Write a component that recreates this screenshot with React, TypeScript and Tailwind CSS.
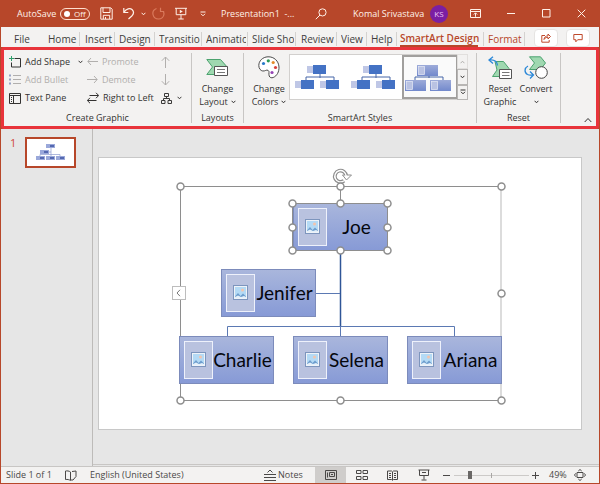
import type { ReactNode } from "react";

type SvgProps = { w: number; h: number; className?: string; children: ReactNode };

function Svg({ w, h, className = "", children }: SvgProps) {
  return (
    <svg
      width={w}
      height={h}
      viewBox={`0 0 ${w} ${h}`}
      fill="none"
      stroke="currentColor"
      strokeWidth={1}
      aria-hidden="true"
      className={`block shrink-0 ${className}`}
    >
      {children}
    </svg>
  );
}

function Caret({ className = "" }: { className?: string }) {
  return (
    <Svg w={5} h={4} className={className}>
      <path d="M.6.8 2.5 2.8 4.4.8" />
    </Svg>
  );
}

/* ---------- Title bar ---------- */

function TitleBar() {
  return (
    <header className="flex h-[27px] shrink-0 items-center bg-[#b7472a] text-[10px] leading-4 text-[#fff1e8]">
      <label className="flex w-[100px] items-center gap-[5px] pl-[17px]">
        <span className="w-[38px] whitespace-nowrap text-[9px]">AutoSave</span>
        <input type="checkbox" className="peer sr-only" />
        <span className="flex h-3 w-[30px] items-center gap-1 rounded-full border border-[#ffe0d0] pl-[3px] text-[8px] leading-[10px]">
          <span className="size-[6px] rounded-full bg-white" />
          Off
        </span>
      </label>
      <div className="flex flex-1 items-center">
        <button aria-label="Save" className="w-[23px]">
          <Svg w={13} h={13}>
            <path d="M.8.8h9.9l1.5 1.5v9.9H.8zM3 .8v4.7h7V.8M3.3 12V8.300h6.400V12M5.500 12v-2" />
          </Svg>
        </button>
        <button aria-label="Undo" className="w-[18px]">
          <Svg w={12} h={13}>
            <path strokeWidth="1.200" d="M.8 1v4.500h4.500M1 5.200C3.500 1.500 7 .8 9 2.500c2 2 1.800 4.500-.2 6.500L5.500 12" />
          </Svg>
        </button>
        <button aria-label="Undo history" className="w-[11px]">
          <Caret />
        </button>
        <button aria-label="Redo" className="w-[23px] text-[#da7a5d]">
          <Svg w={13} h={13}>
            <path strokeWidth="1.200" d="M8.500.8v3.700h3.700M4.500 1.500C1.800 2.500.5 5 1 7.500c.6 2.800 3 4.500 5.500 4.500 3 0 5.300-2.300 5.500-5 0-1-.3-2-.8-2.800" />
          </Svg>
        </button>
        <button aria-label="Start slide show" className="w-[25px]">
          <Svg w={12} h={13}>
            <path d="M0 1.300h12M1.200 1.300v6.400h9.600V1.300M6 7.700V12M3.300 12h5.400" />
            <path d="M4.800 2.800v3.400L7.800 4.500z" fill="currentColor" stroke="none" />
          </Svg>
        </button>
        <button aria-label="Customize toolbar" className="w-[21px]">
          <Svg w={6} h={6}>
            <path d="M.5 1h5M1 2.800 3 4.800 5 2.800" />
          </Svg>
        </button>
        <span className="min-w-[94px] flex-1 whitespace-pre text-[9px]">Presentation1  -...</span>
        <button aria-label="Search" className="w-[38px]">
          <Svg w={12} h={12}>
            <circle cx="7.500" cy="4.400" r="3.600" />
            <path d="M5 7 .8 11.200" />
          </Svg>
        </button>
        <span className="w-[77px] whitespace-nowrap text-[9px]">Komal Srivastava</span>
        <button className="size-[18px] rounded-full bg-[#7b1fa2] text-center text-[8px] leading-[18px] text-[#eac5f5]">
          KS
        </button>
        <button aria-label="Ribbon display options" className="ml-[22px] w-[37px]">
          <Svg w={11} h={9}>
            <path d="M.5.5h10v8H.5zM.5 2.500h10M5.500 7.800V4M3.800 5.500 5.500 3.800l1.700 1.700" />
          </Svg>
        </button>
        <button aria-label="Minimize" className="w-[35px]">
          <Svg w={8} h={9}>
            <path d="M0 4.500h8" />
          </Svg>
        </button>
        <button aria-label="Maximize" className="w-[35px]">
          <Svg w={9} h={9}>
            <path d="M.5.5h7.500v7.500H.5z" />
          </Svg>
        </button>
        <button aria-label="Close" className="w-[23px]">
          <Svg w={9} h={9}>
            <path d="m.7.7 7.600 7.600M8.300.7.7 8.300" />
          </Svg>
        </button>
      </div>
    </header>
  );
}

/* ---------- Tabs ---------- */

const tabs: { name: string; width: string }[] = [
  { name: "File", width: "w-[33px]" },
  { name: "Home", width: "w-[33px] border-r pl-px" },
  { name: "Insert", width: "w-[35px] border-r pl-[5px]" },
  { name: "Design", width: "w-[40px] border-r pl-1" },
  { name: "Transitions", width: "w-[47px] border-r pl-1" },
  { name: "Animations", width: "w-[46px] border-r pl-1" },
  { name: "Slide Show", width: "w-[48px] border-r pl-1" },
  { name: "Review", width: "w-[41px] border-r pl-[5px]" },
  { name: "View", width: "w-[30px] border-r pl-1" },
  { name: "Help", width: "w-[30px] border-r pl-1" },
];

function TabBar() {
  return (
    <nav className="flex h-5 shrink-0 items-center bg-[#f3f2f1] pl-[13px] pt-[3px] text-[10px] leading-[14px] text-[#3f3e3d]">
      {tabs.map((tab) => (
        <button key={tab.name} className={`${tab.width} shrink-0 border-[#d4d2d0] pr-px text-left`}>
          <span className="block overflow-hidden whitespace-nowrap">{tab.name}</span>
        </button>
      ))}
      <button className="w-[86px] shrink-0 self-stretch whitespace-nowrap border-[#d4d2d0] pl-[3px] text-left font-semibold text-[#b7472a]">
        <span className="block h-[17px] w-[78px] border-b-2 border-[#b7472a] pt-px">SmartArt Design</span>
      </button>
      <button className="w-[42px] shrink-0 border-x border-[#d4d2d0] pl-1 text-left text-[#b7472a]">Format</button>
      <div className="ml-auto flex gap-2 self-end pr-[9px] text-[#c0492b]">
        <button aria-label="Share" className="flex h-[18px] w-6 items-center justify-center rounded-sm border border-[#e6e4e2] bg-white">
          <Svg w={10} h={10}>
            <path d="M4 2.500H.8v6.700h7.400V7M3 6.500c.2-2.400 1.800-3.600 4-3.600V1l2.500 2.500L7 6V4.300c-1.800 0-3 .6-4 2.200z" />
          </Svg>
        </button>
        <button aria-label="Comments" className="flex h-[18px] w-6 items-center justify-center rounded-sm border border-[#e6e4e2] bg-white">
          <Svg w={10} h={10}>
            <path d="M.8 1.500h8.400v5.200H4.700L2.800 8.800V6.700h-2z" />
          </Svg>
        </button>
      </div>
    </nav>
  );
}

/* ---------- Ribbon ---------- */

function Group({ label, className, children }: { label: string; className: string; children: ReactNode }) {
  return (
    <section aria-label={label} className={`flex shrink-0 flex-col border-r border-[#c8c6c4] ${className}`}>
      <div className="flex h-[60px] shrink-0">{children}</div>
      <div className="text-center leading-[10px]">{label}</div>
    </section>
  );
}

function Command({ icon, label, disabled, caret }: { icon: ReactNode; label: string; disabled?: boolean; caret?: boolean }) {
  return (
    <button disabled={disabled} className="flex h-[18px] items-center gap-1 whitespace-nowrap disabled:text-[#b1afad]">
      {icon}
      <span>{label}</span>
      {caret && <Caret className="ml-1" />}
    </button>
  );
}

function BigCommand({ icon, first, second, caret, className }: { icon: ReactNode; first: string; second?: string; caret?: boolean; className: string }) {
  return (
    <button className={`flex flex-col items-center leading-[13px] ${className}`}>
      <span className="flex h-[29px] items-start pt-[3px]">{icon}</span>
      <span className="whitespace-nowrap">{first}</span>
      <span className="flex h-[13px] items-center gap-[3px]">
        {second}
        {caret && <Caret />}
      </span>
    </button>
  );
}

const AddShapeIcon = (
  <Svg w={12} h={12}>
    <path d="M5.500 2.500h6v8.500h-9V6.500" />
    <path stroke="#2e9e6b" d="M2.500 0v5M0 2.500h5" />
  </Svg>
);
const BulletIcon = (
  <Svg w={12} h={12}>
    <path d="M4 1.500h8M4 5.500h8M4 9.500h8" />
    <path stroke="#98a3c4" strokeWidth="2" d="M0 1.500h2M0 5.500h2M0 9.500h2" />
  </Svg>
);
const TextPaneIcon = (
  <Svg w={12} h={11}>
    <path d="M.5.5h11v10H.5zM.5 2.500h11M4.500 2.500v8M2 4.500h1M2 6.500h1M2 8.500h1" />
  </Svg>
);
const LeftIcon = (
  <Svg w={11} h={10}>
    <path d="M11 4.500H1M4 1 .8 4.500 4 8" />
  </Svg>
);
const RightIcon = (
  <Svg w={11} h={10}>
    <path d="M0 4.500h10M7 1l3.200 3.500L7 8" />
  </Svg>
);
const SwapIcon = (
  <Svg w={12} h={12}>
    <path d="M2.500 3.500h9M9 .8l2.700 2.700L9 6.200M9.500 8.500h-9M3 5.800.3 8.500 3 11.200" />
  </Svg>
);

function LayoutIcon() {
  return (
    <Svg w={23} h={19}>
      <path d="M.8 1.500h13.700l6.700 7.500-6.700 7.500H.8L6.500 9z" fill="#9fd8b0" stroke="#4ca36f" />
      <path d="M8.500 8.500h13v9h-13z" fill="#fff" stroke="#555" />
      <path d="M11 11.500h8M11 14.500h8" stroke="#777" />
    </Svg>
  );
}

function PaletteIcon() {
  return (
    <Svg w={22} h={23}>
      <path
        d="M10 .8C4.500 1 .8 5 .8 9.500c0 3 1.800 5.300 4 5.500 2.500.2 3.500-1.500 5.200-.7 2 .9.300 3.300 1.200 5.700.6 1.600 2.300 2.200 4 1.500 3.800-1.600 6-5.800 5.800-10.500C20.700 5 16 .6 10 .8z"
        fill="#fff"
        stroke="#4b4b4b"
      />
      <g stroke="none">
        <circle cx="5.500" cy="7.500" r="1.600" fill="#2878c8" />
        <circle cx="10.300" cy="4.800" r="1.600" fill="#2c9a57" />
        <circle cx="15.200" cy="6.500" r="1.600" fill="#e48a2a" />
        <circle cx="17.500" cy="11.500" r="1.600" fill="#d8413c" />
        <circle cx="14" cy="16.500" r="1.600" fill="#9545b4" />
      </g>
    </Svg>
  );
}

function ResetIcon() {
  return (
    <Svg w={25} h={24}>
      <path d="M7 5.500h8.500l5.500 7-5 8H4.500L9 14z" fill="#9fd8b0" stroke="#4ca36f" />
      <path d="M11.500 13.500h12v9h-12z" fill="#fff" stroke="#555" />
      <path d="M14 16.500h7.500M14 19.500h7.500" stroke="#777" />
      <path d="M5 .8 1 4l4 3.500M1.500 4C6 3.500 9 5.500 9.500 9.500" stroke="#2b88d8" strokeWidth="1.300" />
    </Svg>
  );
}

function ConvertIcon() {
  return (
    <Svg w={24} h={24}>
      <path d="M5.500.8h11L21.500 7l-5 6.500h-11L10.500 7z" fill="#9fd8b0" stroke="#4ca36f" />
      <circle cx="17.500" cy="16.500" r="5.800" fill="#fff" stroke="#444" />
      <path d="M4 10C.3 12 0 16.500 3.500 18.500c1.500.8 3.500.8 5 .5M6 15.500 9.500 19 6 22.500" stroke="#2b88d8" strokeWidth="1.300" />
    </Svg>
  );
}

function StylePreview({ selected }: { selected?: boolean }) {
  const boxes = [
    [18, 7],
    [6, 22],
    [31, 22],
  ];
  return (
    <Svg w={52} h={38}>
      <path d="M25 16v4M11 22v-3h28v3" stroke="#4667a8" />
      {boxes.map(([x, y]) =>
        selected ? (
          <g key={x} stroke="none">
            <rect x={x - 5} y={y} width="21" height="11" fill="url(#previewFill)" />
            <rect x={x - 3.500} y={y + 1.500} width="6" height="8" fill="#b9c2e2" stroke="#e7eaf6" strokeWidth=".7" />
          </g>
        ) : (
          <g key={x} stroke="none">
            <rect x={x - 6} y={y + 1} width="7" height="7" fill="#bfc7e6" />
            <rect x={x} y={y} width="13" height="9" fill="#4472c4" />
          </g>
        ),
      )}
      <defs>
        <linearGradient id="previewFill" x1="0" y1="0" x2="0" y2="1">
          <stop offset="0" stopColor="#9dabd9" />
          <stop offset="1" stopColor="#7289cc" />
        </linearGradient>
      </defs>
    </Svg>
  );
}

function Ribbon() {
  return (
    <div className="flex h-[82px] shrink-0 rounded-[3px] border-[3px] border-[#e8343b] bg-[#f3f2f1] pb-[3px] pt-[3px] text-[9px] leading-[14px] text-[#333231]">
      <Group label="Create Graphic" className="w-[188px]">
        <div className="w-[79px] pl-[5px]">
          <Command icon={AddShapeIcon} label="Add Shape" caret />
          <Command icon={BulletIcon} label="Add Bullet" disabled />
          <Command icon={TextPaneIcon} label="Text Pane" />
        </div>
        <div className="w-[78px] pl-1">
          <Command icon={LeftIcon} label="Promote" disabled />
          <Command icon={RightIcon} label="Demote" disabled />
          <Command icon={SwapIcon} label="Right to Left" />
        </div>
        <div className="text-[#b1afad]">
          <button disabled aria-label="Move up" className="flex h-[18px] items-center">
            <Svg w={10} h={12}>
              <path d="M4.500 12V1M.8 4.800 4.500 1l3.700 3.800" />
            </Svg>
          </button>
          <button disabled aria-label="Move down" className="flex h-[18px] items-center">
            <Svg w={10} h={12}>
              <path d="M4.500 0v11M.8 7.200 4.500 11l3.700-3.800" />
            </Svg>
          </button>
          <button aria-label="Organization chart layout" className="flex h-[18px] items-center gap-[5px] text-[#3b3a39]">
            <Svg w={11} h={11}>
              <path d="M3.500.5h4v3h-4zM.5 7.500h3.500v3H.5zM7 7.500h3.500v3H7zM5.500 3.500v2M2.500 7.500v-2h6v2" />
            </Svg>
            <Caret />
          </button>
        </div>
      </Group>

      <Group label="Layouts" className="w-[52px]">
        <BigCommand icon={<span className="pt-[2px]"><LayoutIcon /></span>} first="Change" second="Layout" caret className="w-full" />
      </Group>

      <Group label="SmartArt Styles" className="w-[233px]">
        <BigCommand icon={<PaletteIcon />} first="Change" second="Colors" caret className="w-[45px] pl-[5px]" />
        <div className="mt-px flex h-[46px]">
          <div className="flex w-[168px] border border-[#d2d0ce] bg-white">
            <button aria-label="Simple fill style" className="w-14 pl-[5px]">
              <StylePreview />
            </button>
            <button aria-label="White outline style" className="w-14 pl-[5px]">
              <StylePreview />
            </button>
            <button aria-label="Subtle effect style" className="flex-1 border-2 border-[#a19f9d] bg-[#fafafa]">
              <StylePreview selected />
            </button>
          </div>
          <div className="flex w-[11px] flex-col">
            <button disabled aria-label="Previous styles" className="flex flex-1 items-center justify-center border border-[#e1dfdd] text-[#b1afad]">
              <Caret className="rotate-180" />
            </button>
            <button aria-label="Next styles" className="flex flex-1 items-center justify-center border border-[#b8b6b4]">
              <Caret />
            </button>
            <button aria-label="All styles" className="flex flex-1 items-center justify-center border border-[#b8b6b4]">
              <Svg w={6} h={6}>
                <path d="M.5 1h5M1 2.800 3 4.800 5 2.800" />
              </Svg>
            </button>
          </div>
        </div>
      </Group>

      <Group label="Reset" className="w-[84px]">
        <BigCommand icon={<ResetIcon />} first="Reset" second="Graphic" className="ml-1 w-[38px]" />
        <BigCommand icon={<ConvertIcon />} first="Convert" caret className="w-[34px]" />
      </Group>

      <button aria-label="Collapse the ribbon" className="ml-auto mr-1 self-end">
        <Svg w={8} h={6}>
          <path d="m.7 5 3.300-3.500L7.300 5" />
        </Svg>
      </button>
    </div>
  );
}

/* ---------- Slide ---------- */

function PictureIcon() {
  return (
    <svg viewBox="0 0 15 15" className="block size-[15px]" aria-hidden="true">
      <rect x=".5" y=".5" width="14" height="14" fill="#eef3f9" stroke="#7d95bd" />
      <rect x="2" y="2" width="11" height="11" fill="#b4daf5" />
      <circle cx="9.500" cy="5" r="1.500" fill="#f3c4ad" />
      <path d="M2 11.500 5 8l2.500 3L10 8.500l3 3V13H2z" fill="#6d9dcd" />
      <path d="M2 13v-1l3-1.500 3 1.500 3-1 2 1v1z" fill="#e4f0fa" />
    </svg>
  );
}

const people = [
  { name: "Joe", place: "left-[113px] top-[17px]" },
  { name: "Jenifer", place: "left-[41px] top-[83px]" },
  { name: "Charlie", place: "left-[-1px] top-[150px]" },
  { name: "Selena", place: "left-[113px] top-[150px]" },
  { name: "Ariana", place: "left-[227px] top-[150px]" },
];

const handles = [
  [0, 0], [160, 0], [321, 0], [321, 107], [0, 214], [160, 214], [321, 214],
  [112, 17], [160, 17], [207, 17], [112, 41], [207, 41], [112, 64], [160, 64], [207, 64],
];

function SmartArt() {
  return (
    <div className="relative h-[214px] w-[321px] shrink-0">
      <svg width="321" height="214" className="absolute overflow-visible" fill="none" aria-hidden="true">
        <path d="M.5 0v214M0 .5h321M0 214.500h321" stroke="#8e8e8e" />
        <path d="M321 0v214" stroke="#dcdcdc" strokeWidth="2" />
        <path d="M160.500 0v17" stroke="#8e8e8e" />
        <path d="M160.500 65v75" stroke="#2f5597" strokeWidth="1.500" />
        <path d="M160.500 140v10M135 107.500h25M47.500 150v-9.500h227v9.500" stroke="#5b79b3" />
      </svg>
      {people.map((p) => (
        <div
          key={p.name}
          className={`absolute flex h-12 w-[95px] items-center border border-[#7c8bbb] bg-linear-to-b from-[#a9b6dc] to-[#879ad6] pl-1 ${p.place}`}
        >
          <span className="flex h-[38px] w-[29px] shrink-0 items-center justify-center border border-[#eef1fb] bg-[#b9c2df]">
            <PictureIcon />
          </span>
          <span className="flex-1 text-center font-['Lato','Liberation_Sans',sans-serif] text-[19px] leading-6 text-[#05070d]">{p.name}</span>
        </div>
      ))}
      <svg width="321" height="214" className="absolute overflow-visible" fill="none" aria-hidden="true">
        <path d="M112.500 17.500h95v47h-95z" stroke="#8e8e8e" />
        <path d="M164-5.200A5.700 5.700 0 1 1 166.200-10" stroke="#8e8e8e" strokeWidth="3.800" />
        <path d="M162.500-11h9l-5 5z" fill="#fff" stroke="#8e8e8e" />
        <path d="M164-5.200A5.700 5.700 0 1 1 166.200-10" stroke="#fff" strokeWidth="1.400" />
        <g fill="#fff" stroke="#8e8e8e" strokeWidth="1.500">
          {handles.map(([x, y]) => (
            <circle key={`${x}-${y}`} cx={x + 0.5} cy={y + 0.5} r="3.500" />
          ))}
        </g>
      </svg>
      <button aria-label="Open text pane" className="absolute left-[-8px] top-[100px] flex h-[14px] w-[14px] items-center justify-center border border-[#bdbdbd] bg-white text-[#777]">
        <Svg w={5} h={8}>
          <path d="M4 .8 1 4l3 3.200" />
        </Svg>
      </button>
    </div>
  );
}

function Thumbnail() {
  const boxes = [[19, 5], [13, 11], [9, 17], [19, 17], [29, 17]];
  return (
    <svg viewBox="0 0 47 27" className="block h-[27px] w-[47px]" aria-hidden="true">
      <path d="M24 9v8M20 13h4M13 17v-1.500h20V17" stroke="#8c9bd0" strokeWidth=".7" fill="none" />
      {boxes.map(([x, y]) => (
        <g key={`${x}-${y}`}>
          <rect x={x} y={y} width="9" height="4" fill="#9aa8da" />
          <rect x={x + 4} y={y + 1} width="4" height="2" fill="#5468b0" />
        </g>
      ))}
    </svg>
  );
}

function Workspace() {
  return (
    <main className="flex min-h-[337px] flex-1 bg-[#e6e6e6]">
      <aside className="flex w-[92px] shrink-0 items-start border-r border-[#bdbbb9] pl-[9px] pt-2">
        <span className="w-[15px] text-[11px] leading-3 text-[#d0463c]">1</span>
        <button aria-label="Slide 1" className="border-2 border-[#b7472a] bg-white">
          <Thumbnail />
        </button>
      </aside>
      <div className="mb-px flex flex-1 border-b border-[#c8c6c4] pb-[34px] pl-[5px] pr-[17px] pt-7">
        <div className="flex flex-1 items-center justify-center border border-[#c8c8c8] bg-white pb-[2px]">
          <SmartArt />
        </div>
      </div>
    </main>
  );
}

/* ---------- Status bar ---------- */

function StatusBar() {
  return (
    <footer className="flex h-[17px] shrink-0 items-center border-t border-[#c8c6c4] bg-[#f3f2f1] pl-[5px] text-[9px] leading-[14px] text-[#4a4847]">
      <span className="w-[59px]">Slide 1 of 1</span>
      <button aria-label="Spelling check" className="w-[25px]">
        <Svg w={12} h={11}>
          <path d="M5.500 2v8.500M5.500 2C4 .8 2 .8.500 1v8.500c2-.2 3.500 0 5 1M7 1.500 11 1v5.500L8 10H6" />
        </Svg>
      </button>
      <span className="flex-1 whitespace-nowrap">English (United States)</span>
      <button className="flex w-[51px] items-center gap-[2px]">
        <Svg w={12} h={12}>
          <path d="M0 5.500h12M0 8.500h12M0 11.500h12M3.500 3.500 6 1l2.500 2.500" />
        </Svg>
        Notes
      </button>
      <button aria-label="Normal view" className="flex h-4 w-[31px] items-center justify-center bg-[#cfcdcb]">
        <Svg w={12} h={10}>
          <path d="M.5.5h11v9H.5zM2.500 2.500v5M4.500 2.500h5v4h-5zM6 4.500h2" />
        </Svg>
      </button>
      <button aria-label="Slide sorter" className="flex h-4 w-[31px] items-center justify-center">
        <Svg w={12} h={10}>
          <path d="M.5.5H5v3H.5zM7 .5h4.500v3H7zM.5 6.500H5v3H.5zM7 6.500h4.500v3H7z" />
        </Svg>
      </button>
      <button aria-label="Reading view" className="flex h-4 w-[31px] items-center justify-center">
        <Svg w={11} h={11}>
          <path d="M.5 1h4l1 .8 1-.8h4v8.500h-4l-1 .8-1-.8h-4zM5.500 2v8M2 3.500h2M2 5.500h2M2 7.500h2M7 3.500h2M7 5.500h2M7 7.500h2" />
        </Svg>
      </button>
      <button aria-label="Slide show" className="flex h-4 w-[31px] items-center justify-center">
        <Svg w={12} h={12}>
          <path d="M.5 1h11M1.500 1v5.500h9V1M6 6.500v4M3.500 11h5M4 3.500h4" />
        </Svg>
      </button>
      <button aria-label="Zoom out" className="w-[15px] pl-1">
        <Svg w={7} h={7}>
          <path d="M0 3.500h7" />
        </Svg>
      </button>
      <div className="flex w-[78px] items-center">
        <input
          type="range"
          aria-label="Zoom"
          min={10}
          max={400}
          defaultValue={88}
          className="h-[10px] w-[75px] appearance-none bg-[linear-gradient(#a8a6a4,#a8a6a4),linear-gradient(#cccac8,#cccac8)] bg-[size:1px_5px,100%_1px] bg-center bg-no-repeat [&::-webkit-slider-thumb]:h-2 [&::-webkit-slider-thumb]:w-1 [&::-webkit-slider-thumb]:appearance-none [&::-webkit-slider-thumb]:bg-[#6a6866]"
        />
      </div>
      <button aria-label="Zoom in" className="w-[17px]">
        <Svg w={7} h={7}>
          <path d="M0 3.500h7M3.500 0v7" />
        </Svg>
      </button>
      <button className="w-[25px] text-left">49%</button>
      <button aria-label="Fit slide to window" className="w-[25px]">
        <Svg w={12} h={12}>
          <path d="M3 3.500h6v5H3zM4.300 2 6 .5 7.700 2M4.300 10 6 11.500 7.700 10M1.800 4.300.5 6l1.300 1.700M10.200 4.300 11.500 6l-1.300 1.700" />
        </Svg>
      </button>
    </footer>
  );
}

export default function App() {
  return (
    <div className="flex min-h-screen flex-col bg-[#b7472a] font-['Open_Sans','Noto_Sans',sans-serif]">
      <TitleBar />
      <div className="mx-px mb-px flex flex-1 flex-col">
        <TabBar />
        <Ribbon />
        <Workspace />
        <StatusBar />
      </div>
    </div>
  );
}
